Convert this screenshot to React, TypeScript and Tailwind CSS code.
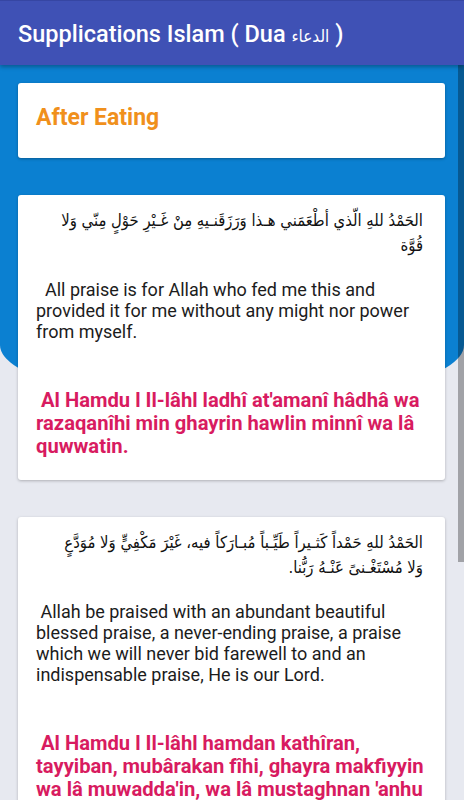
const duas = [
  {
    arabic:
      "الحَمْدُ للهِ الّذي أطْعَمَني هـذا وَرَزَقَنـيهِ مِنْ غَـيْرِ حَوْلٍ مِنّي وَلا قُوَّة",
    english:
      "  All praise is for Allah who fed me this and provided it for me without any might nor power from myself.",
    translit:
      " Al Hamdu l Il-lâhl ladhî at'amanî hâdhâ wa razaqanîhi min ghayrin hawlin minnî wa lâ quwwatin.",
  },
  {
    arabic:
      "الحَمْدُ للهِ حَمْداً كَثـيراً طَيِّـباً مُبـارَكاً فيه، غَيْرَ مَكْفِيٍّ وَلا مُوَدَّعٍ وَلا\u00a0مُسْتَغْـنىً عَنْـهُ رَبُّنا.",
    english:
      " Allah be praised with an abundant beautiful blessed praise, a never-ending praise, a praise which we will never bid farewell to and an indispensable praise, He is our Lord.",
    translit:
      " Al Hamdu l Il-lâhl hamdan kathîran, tayyiban, mubârakan fîhi, ghayra makfiyyin wa lâ muwadda'in, wa lâ mustaghnan 'anhu rabbunâ.",
  },
];

const arabicFont = "font-['DejaVu_Sans_Condensed','DejaVu_Sans',sans-serif]";

function DuaCard({ dua }: { dua: (typeof duas)[number] }) {
  return (
    <div className="bg-white rounded-[3px] shadow-[0_1px_3px_rgba(0,0,0,0.25)] pt-[13px] pb-[22px] pl-[18px] pr-[22px]">
      <p dir="rtl" className={`text-[16.5px] leading-[25px] text-[#111] ${arabicFont}`}>
        {dua.arabic}
      </p>
      <p className="mt-[21px] text-[18px] leading-[21px] text-[#1c1c1c] whitespace-pre-wrap">
        {dua.english}
      </p>
      <p className="mt-[47px] mr-[-8px] text-[20.2px] leading-[23px] font-bold text-[#d81b60] whitespace-pre-wrap">
        {dua.translit}
      </p>
    </div>
  );
}

export default function App() {
  return (
    <div className="relative w-[464px] h-[800px] overflow-hidden bg-[#e7e9f0] font-['Roboto',sans-serif]">
      <header className="relative z-20 h-[65px] bg-[#3f51b5] border-t border-[#3646a3] flex items-center pl-[18px] pt-[4px] shadow-[0_2px_4px_rgba(0,0,0,0.3)]">
        <h1 className="text-white text-[23.5px] font-medium">
          Supplications Islam ( Dua <span className={`${arabicFont} text-[17px] font-normal`}>الدعاء</span> )
        </h1>
      </header>

      <div className="relative">
        <div className="absolute inset-x-0 top-0 h-[339px] bg-[#0b80d1] rounded-[0_0_50%_50%/0_0_59px_59px]" />

        <div className="relative z-10 flex flex-col gap-[37px] pl-[18px] pr-[19px] pt-[18px]">
          <div className="bg-white rounded-[3px] shadow-[0_1px_3px_rgba(0,0,0,0.3)] h-[75px] flex items-center pl-[18px] pb-[5px]">
            <h2 className="text-[23px] font-bold text-[#f0901c]">After Eating</h2>
          </div>
          {duas.map((d, i) => (
            <DuaCard key={i} dua={d} />
          ))}
        </div>
      </div>

      <div className="absolute right-0 top-[65px] z-30 w-[6px] h-[497px] bg-black/30" />
    </div>
  );
}
